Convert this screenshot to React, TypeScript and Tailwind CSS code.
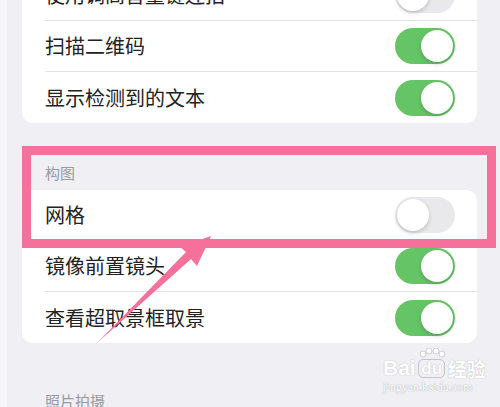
import React from 'react';

const cjk = '"Noto Sans CJK SC", "Noto Sans", sans-serif';

type Item = { label: string; on: boolean };

const cameraItems: Item[] = [
  { label: '使用调高音量键连拍', on: false },
  { label: '扫描二维码', on: true },
  { label: '显示检测到的文本', on: true },
];

const compositionItems: Item[] = [
  { label: '网格', on: false },
  { label: '镜像前置镜头', on: true },
  { label: '查看超取景框取景', on: true },
];

function Toggle({ on }: { on: boolean }) {
  return (
    <div
      className={
        on
          ? 'flex h-[36px] w-[60px] items-center justify-end rounded-full bg-[#65c466] px-[2px]'
          : 'flex h-[36px] w-[60px] items-center justify-start rounded-full bg-[#e9e9eb] px-[2px]'
      }
    >
      <div className="h-[32px] w-[32px] rounded-full bg-white shadow-[0_2px_4px_rgba(0,0,0,0.18)]" />
    </div>
  );
}

function Group({ items }: { items: Item[] }) {
  return (
    <div className="ml-[15px] mr-[23px] overflow-hidden rounded-[11px] bg-white">
      {items.map((item, i) => (
        <div key={item.label} className="pl-[23px]">
          <div
            className={
              i < items.length - 1
                ? 'flex h-[51px] items-center justify-between border-b border-[#e3e3e6] pr-[22px]'
                : 'flex h-[51px] items-center justify-between pr-[22px]'
            }
          >
            <span className="text-[20px] leading-none text-[#222224]">{item.label}</span>
            <Toggle on={item.on} />
          </div>
        </div>
      ))}
    </div>
  );
}

function Header({ text }: { text: string }) {
  return (
    <div className="flex h-[18px] items-center pl-[38px] text-[15px] leading-none text-[#9a9a9f]">
      {text}
    </div>
  );
}

export default function App() {
  return (
    <div
      className="relative flex h-[407px] w-[500px] overflow-hidden bg-[#efeff4]"
      style={{ fontFamily: cjk }}
    >
      <div className="w-[7px] shrink-0 bg-[#f6f6f9]" />
      <div className="flex-1 -mt-[30px]">
        <Group items={cameraItems} />
        <div className="mt-[40px] mb-[9px]">
          <Header text="构图" />
        </div>
        <Group items={compositionItems} />
        <div className="mt-[48px]">
          <Header text="照片拍摄" />
        </div>
      </div>

      {/* highlight box */}
      <div className="absolute left-[22px] top-[146px] h-[102px] w-[474px] border-[9px] border-[#f5709a]" />

      {/* arrow */}
      <svg className="absolute left-0 top-0" width="500" height="407" viewBox="0 0 500 407">
        <polygon
          points="211,236 180,247 186,252 97,343 191,259 197,266"
          fill="#f5709a"
        />
      </svg>

      {/* watermark */}
      <div className="absolute left-[383px] top-[348px] flex flex-col items-start">
        <div className="flex items-end gap-[1px] text-[21px] font-bold leading-none text-white [text-shadow:0_0_1px_#bdbdc2,0_0_1px_#bdbdc2]" style={{ fontFamily: '"Liberation Sans", sans-serif' }}>
          <span>Bai</span>
          <div className="relative flex flex-col items-center">
            <svg width="30" height="10" viewBox="0 0 30 10" className="mb-[1px]">
              <circle cx="6" cy="6" r="3" fill="#fff" stroke="#c4c4c8" strokeWidth="0.8" />
              <circle cx="12" cy="3" r="3" fill="#fff" stroke="#c4c4c8" strokeWidth="0.8" />
              <circle cx="19" cy="3" r="3" fill="#fff" stroke="#c4c4c8" strokeWidth="0.8" />
              <circle cx="25" cy="6" r="3" fill="#fff" stroke="#c4c4c8" strokeWidth="0.8" />
            </svg>
            <span className="rounded-[5px] border border-[#c4c4c8] px-[2px] text-[17px]">du</span>
          </div>
          <span className="text-[19px]" style={{ fontFamily: cjk }}>经验</span>
        </div>
        <span
          className="mt-[3px] text-[12px] leading-none text-white [text-shadow:0_0_1px_#b5b5ba,0_0_1px_#b5b5ba]"
          style={{ fontFamily: '"Liberation Serif", serif' }}
        >
          jingyan.baidu.com
        </span>
      </div>
    </div>
  );
}
